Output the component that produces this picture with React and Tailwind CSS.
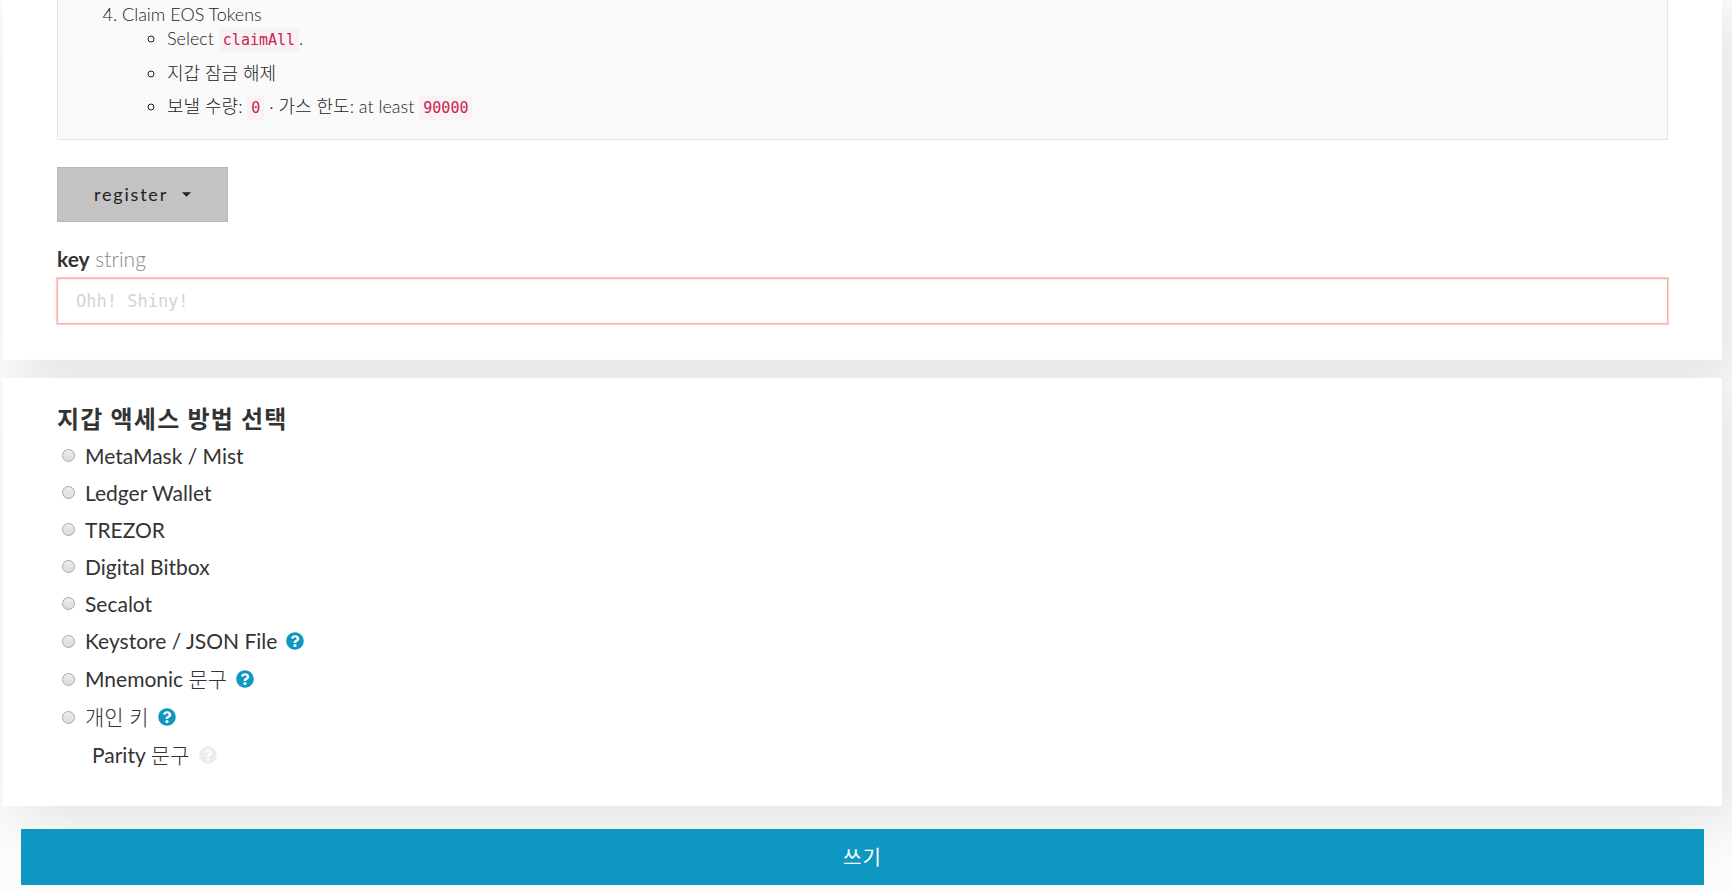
import { useState } from "react";
import { FaQuestionCircle } from "react-icons/fa";

const walletOptions = [
  { id: "metamask", label: "MetaMask / Mist" },
  { id: "ledger", label: "Ledger Wallet" },
  { id: "trezor", label: "TREZOR" },
  { id: "bitbox", label: "Digital Bitbox" },
  { id: "secalot", label: "Secalot" },
  { id: "keystore", label: "Keystore / JSON File", help: true },
  { id: "mnemonic", label: "Mnemonic", korean: "문구", help: true },
  { id: "privatekey", korean: "개인 키", help: true },
];

const Code = ({ children }) => (
  <code className="bg-[#f9f2f4] px-1 py-[3px] font-['DejaVu_Sans_Mono',monospace] text-[15px] text-[#c7254e]">
    {children}
  </code>
);

const Card = ({ className, children }) => (
  <section className={`bg-white px-[54px] shadow-[16px_16px_47px_0_rgba(0,0,0,0.09)] ${className}`}>
    {children}
  </section>
);

const HelpLink = () => (
  <a href="#help" aria-label="Help" className="text-[#0e97c0]">
    <FaQuestionCircle className="size-[18px]" />
  </a>
);

const WalletOption = ({ option, selected, onSelect }) => (
  <li className={`flex items-center gap-[9px] ${option.help ? "h-[38px]" : "h-[37px]"}`}>
    <label className="flex items-center gap-[10px] pl-[5px]">
      <input
        type="radio"
        name="wallet"
        value={option.id}
        checked={selected === option.id}
        onChange={() => onSelect(option.id)}
        className="size-[13px] appearance-none rounded-full border border-[#a9a9a9] bg-linear-to-b from-[#ededed] to-[#dcdcdc] checked:border-4 checked:border-[#0e97c0]"
      />
      <span>
        {option.label} {option.korean && <span className="font-light">{option.korean}</span>}
      </span>
    </label>
    {option.help && <HelpLink />}
  </li>
);

const App = () => {
  const [wallet, setWallet] = useState("");
  const [key, setKey] = useState("");

  return (
    <main className="overflow-hidden bg-[#fbfbfb] pr-[10px] pb-[5px] pl-[3px] font-['Lato','Noto_Sans_CJK_KR',sans-serif] text-[#333]">
      <Card className="pb-9">
        <div className="border border-t-0 border-[#e5e5e5] bg-[#fafafa] pt-[2px] pb-[19px] pl-16 text-[18px] leading-6 font-light text-[#222]">
          <ol start="4" className="list-decimal">
            <li>
              Claim EOS Tokens
              <ul className="list-[circle] space-y-[9px] pl-[45px]">
                <li>
                  Select <Code>claimAll</Code>.
                </li>
                <li>지갑 잠금 해제</li>
                <li>
                  보낼 수량: <Code>0</Code> · 가스 한도: at least <Code>90000</Code>
                </li>
              </ul>
            </li>
          </ol>
        </div>

        <button
          type="button"
          className="mt-[27px] flex h-[55px] items-center gap-[14px] border border-[#b8b8b8] bg-[#c3c3c3] px-9 text-[18px] tracking-widest text-[#222]"
        >
          register
          <svg viewBox="0 0 10 5" className="h-[5px] w-[9px]" fill="currentColor" aria-hidden="true">
            <path d="M0 0h10L5 5z" />
          </svg>
        </button>

        <label htmlFor="key" className="mt-[23px] block text-[21px] leading-7 font-light text-[#888]">
          <span className="font-bold text-[#333]">key</span> string
        </label>
        <input
          id="key"
          type="text"
          value={key}
          onChange={(e) => setKey(e.target.value)}
          placeholder="Ohh! Shiny!"
          className="mt-[5px] block h-[46px] w-full border border-[#f8b0ac] px-[18px] font-['DejaVu_Sans_Mono',monospace] text-[17px] shadow-[inset_0_1px_2px_rgba(0,0,0,0.08),0_0_1px_1px_rgba(248,176,172,0.6)] outline-none placeholder:text-[#d3d3d3]"
        />
      </Card>

      <Card className="mt-[18px] pt-[25px] pb-8">
        <h4 className="text-[24px] leading-8 font-bold tracking-wider">지갑 액세스 방법 선택</h4>
        <ul className="mt-[2px] text-[21px] leading-7">
          {walletOptions.map((option) => (
            <WalletOption key={option.id} option={option} selected={wallet} onSelect={setWallet} />
          ))}
          <li className="flex h-[38px] items-center gap-[10px] pl-[35px]">
            <span>
              Parity <span className="font-light">문구</span>
            </span>
            <FaQuestionCircle className="size-[18px] text-[#ececec]" />
          </li>
        </ul>
      </Card>

      <div className="relative mt-[23px] px-[18px]">
        <button type="button" className="h-14 w-full bg-[#0e97c0] text-[20px] tracking-wider text-white">
          쓰기
        </button>
      </div>
    </main>
  );
};

export default App;
